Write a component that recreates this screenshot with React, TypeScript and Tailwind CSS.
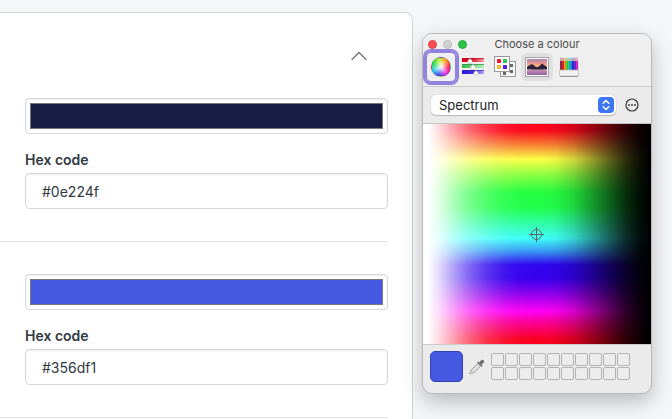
import { useState } from "react";
import type { ReactNode } from "react";
import { clsx } from "clsx";

type ColourFieldProps = {
  id: string;
  swatch: string;
  hex: string;
};

function ColourField({ id, swatch, hex }: ColourFieldProps) {
  const [colour, setColour] = useState(swatch);
  const [code, setCode] = useState(hex);

  return (
    <div className="border-b border-[#e1e2e4] py-8 pl-[25px]">
      <input
        type="color"
        aria-label="Colour"
        value={colour}
        onChange={(e) => setColour(e.target.value)}
        className="block h-9 w-full rounded-sm border border-[#d3d9de] bg-white p-1 shadow-[inset_0_1px_2px_rgba(0,0,0,0.08)] [&::-webkit-color-swatch-wrapper]:p-0 [&::-webkit-color-swatch]:border [&::-webkit-color-swatch]:border-[#777777]"
      />
      <label htmlFor={id} className="mt-4 block text-sm leading-5 font-semibold text-[#2f3941]">
        Hex code
      </label>
      <input
        id={id}
        type="text"
        value={code}
        onChange={(e) => setCode(e.target.value)}
        className="mt-[3px] block h-9 w-full rounded-sm border border-[#d3d9de] bg-white px-4 text-sm text-[#2f3941] shadow-[inset_0_1px_2px_rgba(0,0,0,0.08)]"
      />
    </div>
  );
}

function SlidersIcon() {
  const rows = [
    { y: 1, fill: "url(#slide-red)", edge: "#b3101f", knob: 8 },
    { y: 7, fill: "url(#slide-green)", edge: "#2c8f42", knob: 11 },
    { y: 13, fill: "url(#slide-blue)", edge: "#3a2fb5", knob: 14 },
  ];
  return (
    <svg width="22" height="18" viewBox="0 0 22 18">
      <defs>
        <linearGradient id="slide-red">
          <stop offset="0" stopColor="#d9001d" />
          <stop offset="0.4" stopColor="#d9001d" />
          <stop offset="1" stopColor="#f0a3a3" />
        </linearGradient>
        <linearGradient id="slide-green">
          <stop offset="0" stopColor="#2fb84e" />
          <stop offset="1" stopColor="#b5f0bd" />
        </linearGradient>
        <linearGradient id="slide-blue">
          <stop offset="0" stopColor="#2c18d8" />
          <stop offset="0.5" stopColor="#3c2ce0" />
          <stop offset="1" stopColor="#b5b0f5" />
        </linearGradient>
      </defs>
      {rows.map((row) => (
        <g key={row.y}>
          <rect x="0" y={row.y - 1} width="22" height="4" fill={row.fill} />
          <path d={`M0 ${row.y - 0.5}H22`} stroke={row.edge} strokeOpacity="0.7" />
        </g>
      ))}
      {rows.map((row) => (
        <path
          key={row.y}
          d={`M${row.knob} ${row.y - 0.5}c1 1 2.500 1.700 2.500 3.200a2.500 1.900 0 0 1-5 0c0-1.500 1.500-2.200 2.500-3.200z`}
          fill="#fff"
          stroke="#999"
          strokeWidth="0.4"
        />
      ))}
    </svg>
  );
}

function PalettesIcon() {
  return (
    <svg width="22" height="22" viewBox="0 0 22 22">
      <rect x="6.5" y="5.5" width="15" height="15" fill="#f5f5f5" stroke="#999" />
      <path d="M16 8h3v3h-3zM16 14h3v3h-3zM9 15h3v4h-3z" fill="#666" />
      <rect x="0.5" y="0.5" width="15" height="15" fill="#fff" stroke="#999" />
      <rect x="3" y="3" width="4" height="4" rx="0.5" fill="#ef1730" />
      <rect x="9" y="3" width="4" height="4" rx="0.5" fill="#31c653" />
      <rect x="3" y="9" width="4" height="4" rx="0.5" fill="#f7b52c" />
      <rect x="9" y="9" width="4" height="4" rx="0.5" fill="#4a25e8" />
    </svg>
  );
}

function PictureIcon() {
  return (
    <svg width="24" height="20" viewBox="0 0 24 20">
      <defs>
        <linearGradient id="sky" x1="0" y1="0" x2="0" y2="1">
          <stop offset="0" stopColor="#a583b5" />
          <stop offset="0.3" stopColor="#f09a86" />
          <stop offset="0.5" stopColor="#fbc070" />
          <stop offset="0.7" stopColor="#c58cb0" />
          <stop offset="1" stopColor="#8c62a0" />
        </linearGradient>
      </defs>
      <rect x="0.5" y="0.5" width="23" height="19" fill="#fff" stroke="#a3a3a3" />
      <rect x="2" y="2" width="20" height="16" fill="url(#sky)" />
      <path d="M2 10l2-1.500 3-1.500 2 1.500 2 1.500h2l2-1.500 2-2 2 1.500 3 2v2l-5 .500h-9l-6-.500z" fill="#2b2240" />
    </svg>
  );
}

function PencilsIcon() {
  const pencils = ["#9c2a3a", "#e52032", "#f0a824", "#55d630", "#28cfae", "#2495e8", "#2432df", "#7a27e0", "#e32ad4"];
  return (
    <svg width="20" height="20" viewBox="0 0 20 20">
      <rect x="0.5" y="4" width="19" height="15" rx="1" fill="#ddd" />
      {pencils.map((fill, i) => (
        <g key={fill}>
          <path d={`M${1 + i * 2} 4.500l1-4 1 4z`} fill="#c9a58c" />
          <path d={`M${1.4 + i * 2} 2.500l.6-2.200.6 2.200z`} fill={fill} />
          <rect x={1 + i * 2} y="4" width="2" height="9" fill={fill} />
          <rect x={2.5 + i * 2} y="4" width="0.5" height="9" fill="#222" fillOpacity="0.4" />
        </g>
      ))}
      <rect x="0.5" y="13" width="19" height="6" rx="1" fill="#f1f1f1" stroke="#b5b5b5" strokeWidth="0.7" />
      <path d="M1 19.500h18" stroke="#999" />
    </svg>
  );
}

function EyedropperIcon() {
  return (
    <svg width="16" height="16" viewBox="0 0 16 16" aria-hidden="true">
      <path d="M9 4.500l2.500 2.500-6.200 6.200-2.800 1.200-1.300.7-.6-.6.700-1.300 1.300-2.600z" fill="#e2e2e2" stroke="#999" />
      <path d="M8 3.300l1-.9 1.200 1.100 1.900-2.200c1.700-1.400 4 .7 2.600 2.500L12.500 5.800l1.100 1.200-1 1z" fill="#707070" />
    </svg>
  );
}

type Tool = { name: string; icon: ReactNode };

const tools: Tool[] = [
  {
    name: "Colour wheel",
    icon: (
      <span className="block size-5 rounded-full border border-black/20 bg-[radial-gradient(circle,white_0%,transparent_62%),conic-gradient(from_90deg,#ff1f55,#e83eea,#4a45f0,#38d2f5,#2fe04b,#b8f03c,#ff9a30,#ff1f55)]" />
    ),
  },
  { name: "Colour sliders", icon: <SlidersIcon /> },
  { name: "Colour palettes", icon: <PalettesIcon /> },
  { name: "Image palettes", icon: <PictureIcon /> },
  { name: "Pencils", icon: <PencilsIcon /> },
];

function Spectrum() {
  return (
    <div className="relative h-[220px] bg-[linear-gradient(to_right,white_0%,white_2%,rgb(255_255_255/0.86)_7%,rgb(255_255_255/0.64)_13%,rgb(255_255_255/0.4)_20%,rgb(255_255_255/0.2)_28%,rgb(255_255_255/0.07)_36%,rgb(255_255_255/0.02)_42%,transparent_50%),linear-gradient(to_left,black_0%,rgb(0_0_0/0.94)_5%,rgb(0_0_0/0.82)_11%,rgb(0_0_0/0.62)_18%,rgb(0_0_0/0.38)_26%,rgb(0_0_0/0.16)_34%,rgb(0_0_0/0.03)_42%,transparent_48%),linear-gradient(to_bottom,#fb001b_0%,#fb0a1c_3%,#f88a35_10%,#faff45_16%,#8dff42_23%,#25ff40_31%,#20ff4b_38%,#30ffa5_45%,#3ffff8_52%,#3795f3_58%,#3005ef_64%,#3500ee_70%,#8b00ee_77%,#ff00f7_85%,#fa0087_91%,#fb0020_98%)]">
      <svg
        className="absolute top-1/2 left-1/2 -translate-x-1/2 -translate-y-1/2"
        width="16"
        height="16"
        viewBox="0 0 16 16"
        fill="none"
        stroke="#5d6366"
      >
        <circle cx="7.5" cy="8.5" r="5" />
        <path d="M7.500 1v15M0 8.500h15" />
      </svg>
    </div>
  );
}

function ColourPanel() {
  const [active, setActive] = useState("Colour wheel");

  return (
    <aside className="relative z-10 mt-[33px] w-[230px] shrink-0 overflow-hidden rounded-[10px] border border-[#b9b9b9] bg-[#ebebeb] shadow-[0_8px_20px_rgba(0,0,0,0.24)]">
      <header className="border-b border-[#c9c9c9] bg-[#efefef]">
        <div className="grid h-[15px] grid-cols-[1fr_auto_1fr] items-center pt-1">
          <div className="flex gap-1.5 pl-[5px]">
            <button aria-label="Close" className="size-[9px] rounded-full border border-[#dc4345] bg-[#fb4d53]" />
            <button aria-label="Minimise" className="size-[9px] rounded-full border border-[#bcbcbc] bg-[#d0d0d0]" />
            <button aria-label="Zoom" className="size-[9px] rounded-full border border-[#25aa3c] bg-[#2bc447]" />
          </div>
          <h2 className="text-[11px] leading-3 text-[#4a4a4a]">Choose a colour</h2>
        </div>
        <div className="flex h-[37px] items-center pb-px pl-0.5">
          {tools.map((tool) => (
            <button
              key={tool.name}
              aria-label={tool.name}
              onClick={() => setActive(tool.name)}
              className={clsx(
                "flex w-8 items-center justify-center rounded-md",
                tool.name === "Image palettes" && "bg-[#e0e0e0]",
                tool.name === active ? "h-8 shadow-[inset_0_0_0_2px_#9182dc,0_0_0_2px_#9182dc]" : "h-7",
              )}
            >
              {tool.icon}
            </button>
          ))}
        </div>
      </header>

      <div className="flex h-[37px] items-center gap-[9px] border-b border-[#c4c4c4] pr-3 pl-2">
        <div className="relative flex-1">
          <select
            aria-label="Image palette"
            className="block h-5 w-full appearance-none rounded-[5px] bg-white px-2 text-[13px] leading-5 text-[#222222] shadow-[0_0_1px_rgba(0,0,0,0.3),0_1px_1px_rgba(0,0,0,0.2)]"
          >
            <option>Spectrum</option>
          </select>
          <span className="pointer-events-none absolute top-0.5 right-0.5 flex size-4 items-center justify-center rounded-sm bg-[#3c76f5]">
            <svg width="8" height="12" viewBox="0 0 8 12" fill="none" stroke="white" strokeWidth="1.5" strokeLinecap="round" strokeLinejoin="round">
              <path d="M1.200 4.200L4 1.500l2.800 2.700M1.200 7.800L4 10.500l2.800-2.700" />
            </svg>
          </span>
        </div>
        <button aria-label="More options">
          <svg width="14" height="14" viewBox="0 0 14 14">
            <circle cx="7" cy="7" r="6" fill="none" stroke="#333" strokeWidth="1.2" />
            <circle cx="4" cy="7" r="0.9" fill="#333" />
            <circle cx="7" cy="7" r="0.9" fill="#333" />
            <circle cx="10" cy="7" r="0.9" fill="#333" />
          </svg>
        </button>
      </div>

      <Spectrum />

      <footer className="flex items-center border-t border-[#cccccc] px-[7px] pt-1.5 pb-[11px]">
        <button aria-label="Current colour" className="h-[31px] w-[33px] rounded-[5px] border border-[#3444b5] bg-[#4559e3]" />
        <button aria-label="Pick from screen" className="ml-1.5">
          <EyedropperIcon />
        </button>
        <div className="ml-1.5 grid grid-cols-10 gap-px">
          {Array.from({ length: 20 }, (_, i) => (
            <button key={i} aria-label={`Saved colour ${i + 1}`} className="size-[13px] rounded-[2px] border border-[#b2b2b2] bg-[#ececec]" />
          ))}
        </div>
      </footer>
    </aside>
  );
}

export default function App() {
  return (
    <main className="flex h-screen items-start gap-[9px] overflow-hidden bg-[#f5f6f8] pr-5 font-['Inter',sans-serif]">
      <section className="mt-3 min-w-0 flex-1 rounded-tr-lg border-t border-r border-[#cfd7dd] bg-white pr-6 pb-8">
        <div className="flex justify-end pt-8 pr-5">
          <button aria-label="Collapse section" className="flex h-[21px] items-center">
            <svg width="18" height="10" viewBox="0 0 18 10" fill="none" stroke="#68737d" strokeWidth="1.3" strokeLinecap="round" strokeLinejoin="round">
              <path d="M2 8.500l7-7 7 7" />
            </svg>
          </button>
        </div>
        <ColourField id="hex-primary" swatch="#181d43" hex="#0e224f" />
        <ColourField id="hex-accent" swatch="#4559e3" hex="#356df1" />
      </section>
      <ColourPanel />
    </main>
  );
}
